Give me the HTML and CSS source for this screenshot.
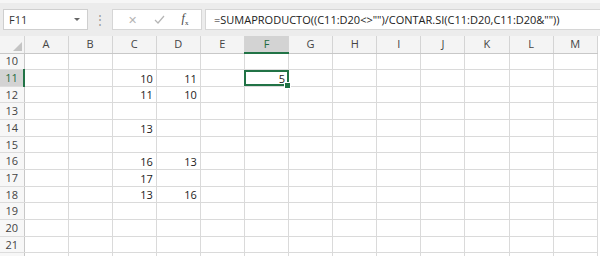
FILE: index.html
```html
<!DOCTYPE html>
<html lang="es">
<head>
  <meta charset="UTF-8" />
  <title>Excel - SUMAPRODUCTO</title>
  <link rel="stylesheet" href="styles.css">
</head>
<body>

<div class="formula-bar">
  <div class="name-box">
    <span>F11</span>
    <span class="caret"></span>
  </div>
  <div class="grip">&#8942;</div>
  <div class="fx-box">
    <span class="icon cancel">&#x2715;</span>
    <span class="icon ok">
      <svg width="11" height="9" viewBox="0 0 11 9"><path d="M1 5 L4 8 L10 1" fill="none" stroke="#b5b5b5" stroke-width="1.2"/></svg>
    </span>
    <span class="icon fx"><i>f</i><sub>x</sub></span>
  </div>
  <div class="formula">=SUMAPRODUCTO((C11:D20&lt;&gt;"")/CONTAR.SI(C11:D20,C11:D20&amp;""))</div>
</div>

<table class="sheet">
  <colgroup>
    <col class="head-col">
    <col span="13" class="cell-col">
  </colgroup>
  <thead>
    <tr>
      <th class="corner"><span class="tri"></span></th>
      <th>A</th><th>B</th><th>C</th><th>D</th><th>E</th><th class="active">F</th><th>G</th><th>H</th><th>I</th><th>J</th><th>K</th><th>L</th><th>M</th>
    </tr>
  </thead>
  <tbody>
    <tr><th>10</th><td></td><td></td><td></td><td></td><td></td><td></td><td></td><td></td><td></td><td></td><td></td><td></td><td></td></tr>
    <tr><th class="active">11</th><td></td><td></td><td>10</td><td>11</td><td></td><td class="selected">5<span class="handle"></span></td><td></td><td></td><td></td><td></td><td></td><td></td><td></td></tr>
    <tr><th>12</th><td></td><td></td><td>11</td><td>10</td><td></td><td></td><td></td><td></td><td></td><td></td><td></td><td></td><td></td></tr>
    <tr><th>13</th><td></td><td></td><td></td><td></td><td></td><td></td><td></td><td></td><td></td><td></td><td></td><td></td><td></td></tr>
    <tr><th>14</th><td></td><td></td><td>13</td><td></td><td></td><td></td><td></td><td></td><td></td><td></td><td></td><td></td><td></td></tr>
    <tr><th>15</th><td></td><td></td><td></td><td></td><td></td><td></td><td></td><td></td><td></td><td></td><td></td><td></td><td></td></tr>
    <tr><th>16</th><td></td><td></td><td>16</td><td>13</td><td></td><td></td><td></td><td></td><td></td><td></td><td></td><td></td><td></td></tr>
    <tr><th>17</th><td></td><td></td><td>17</td><td></td><td></td><td></td><td></td><td></td><td></td><td></td><td></td><td></td><td></td></tr>
    <tr><th>18</th><td></td><td></td><td>13</td><td>16</td><td></td><td></td><td></td><td></td><td></td><td></td><td></td><td></td><td></td></tr>
    <tr><th>19</th><td></td><td></td><td></td><td></td><td></td><td></td><td></td><td></td><td></td><td></td><td></td><td></td><td></td></tr>
    <tr><th>20</th><td></td><td></td><td></td><td></td><td></td><td></td><td></td><td></td><td></td><td></td><td></td><td></td><td></td></tr>
    <tr><th>21</th><td></td><td></td><td></td><td></td><td></td><td></td><td></td><td></td><td></td><td></td><td></td><td></td><td></td></tr>
    <tr><th></th><td></td><td></td><td></td><td></td><td></td><td></td><td></td><td></td><td></td><td></td><td></td><td></td><td></td></tr>
  </tbody>
</table>

</body>
</html>
```

FILE: styles.css
```css
body {
  margin: 0;
  width: 600px;
  height: 256px;
  overflow: hidden;
  background: #ffffff;
  font-family: "Open Sans", "Liberation Sans", sans-serif;
  color: #333;
}

.formula-bar {
  height: 36px;
  background: #ececec;
  border-top: 3px solid #f6f6f6;
  box-sizing: border-box;
  display: flex;
  align-items: flex-start;
  padding-top: 6px;
  padding-left: 3px;
}

.name-box {
  width: 85px;
  height: 21px;
  box-sizing: border-box;
  background: #fff;
  border: 1px solid #cfcfcf;
  display: flex;
  align-items: center;
  justify-content: space-between;
  padding: 0 7px 0 5px;
  font-size: 11px;
  color: #333;
}

.caret {
  width: 0;
  height: 0;
  border-left: 3px solid transparent;
  border-right: 3px solid transparent;
  border-top: 3px solid #666;
}

.grip {
  width: 24px;
  text-align: center;
  font-size: 12px;
  line-height: 21px;
  color: #999;
}

.fx-box {
  width: 90px;
  height: 21px;
  box-sizing: border-box;
  background: #fff;
  border: 1px solid #d6d6d6;
  display: flex;
  align-items: center;
  justify-content: space-around;
  padding: 0 4px 0 6px;
}

.icon {
  font-size: 11px;
  line-height: 1;
}

.cancel {
  color: #b5b5b5;
}

.fx {
  font-family: "Liberation Serif", serif;
  font-size: 12px;
  color: #444;
}

.fx sub {
  font-size: 7px;
}

.formula {
  flex: 1;
  margin-left: 3px;
  height: 21px;
  box-sizing: border-box;
  background: #fff;
  border: 1px solid #d6d6d6;
  border-right: none;
  padding-left: 8px;
  font-size: 11px;
  line-height: 19px;
  white-space: nowrap;
  color: #222;
}

.sheet {
  border-collapse: collapse;
  table-layout: fixed;
  width: 597px;
  font-size: 11px;
}

.head-col {
  width: 24px;
}

.cell-col {
  width: 44.1px;
}

.sheet thead tr {
  height: 17px;
}

.sheet tbody tr {
  height: 16.67px;
}

.sheet thead th {
  padding: 0;
  line-height: 14px;
  background: #f4f4f4;
  border-right: 1px solid #d4d4d4;
  border-bottom: 1px solid #c8c8c8;
  font-weight: normal;
  color: #444;
}

.sheet thead th.corner {
  position: relative;
}

.tri {
  position: absolute;
  right: 2px;
  bottom: 2px;
  width: 0;
  height: 0;
  border-left: 9px solid transparent;
  border-bottom: 9px solid #c4c4c4;
}

.sheet thead th.active {
  background: #d3d3d3;
  color: #1e6b40;
  border-bottom: 2px solid #217346;
}

.sheet tbody th {
  padding: 0;
  line-height: 14px;
  background: #f7f7f7;
  border-right: 1px solid #c8c8c8;
  border-bottom: 1px solid #dcdcdc;
  font-weight: normal;
  color: #444;
  text-align: center;
}

.sheet tbody th.active {
  background: #d3d3d3;
  color: #1e6b40;
  border-right: 2px solid #217346;
}

.sheet td {
  padding: 0 3px 0 0;
  border-right: 1px solid #dadada;
  border-bottom: 1px solid #dadada;
  text-align: right;
  vertical-align: bottom;
  line-height: 14px;
  color: #222;
}

.sheet td.selected {
  position: relative;
  outline: 2px solid #217346;
  outline-offset: -2px;
}

.handle {
  position: absolute;
  right: -3px;
  bottom: -3px;
  width: 5px;
  height: 5px;
  background: #217346;
  border: 1px solid #fff;
}
```
